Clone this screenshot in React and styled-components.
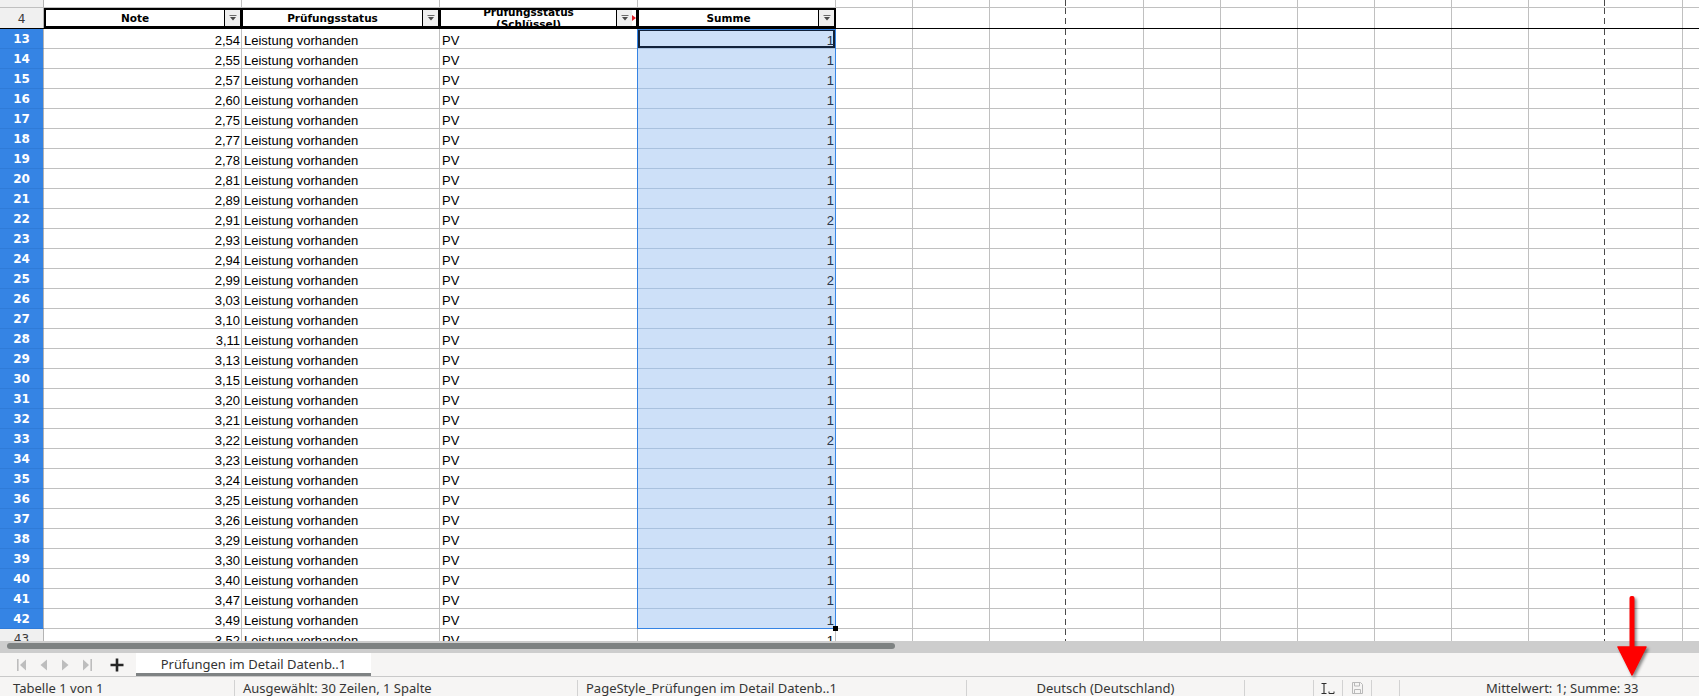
import styled, { createGlobalStyle, css } from 'styled-components'

const GlobalStyle = createGlobalStyle`
  html, body {
    margin: 0;
    padding: 0;
    width: 1699px;
    height: 696px;
    overflow: hidden;
    background: #ffffff;
  }
  #root {
    height: 696px;
  }
`

const GRID = '#c0c0c0'
const SEL_GRID = '#a9c1de'
const SEL_BG = '#cde0f8'
const ACCENT = '#3584e4'

const Page = styled.div`
  position: relative;
  width: 1699px;
  height: 696px;
  display: flex;
  flex-direction: column;
  overflow: hidden;
  font-family: 'Noto Sans', 'DejaVu Sans', sans-serif;
`

const Sheet = styled.div`
  position: relative;
  height: 641px;
  flex: none;
  overflow: hidden;
`

const Row = styled.div`
  display: flex;
  height: ${({ $h }) => $h}px;
  white-space: nowrap;
`

const RowHead = styled.div`
  width: 44px;
  flex: none;
  box-sizing: border-box;
  display: flex;
  align-items: center;
  justify-content: center;
  border-right: 1px solid #b4b4b4;
  border-bottom: ${({ $noBottom, $sel }) => ($noBottom ? 'none' : `1px solid ${$sel ? '#2f7bd8' : GRID}`)};
  background: ${({ $sel }) => ($sel ? ACCENT : '#f0f0f0')};
  color: ${({ $sel }) => ($sel ? '#ffffff' : '#3a3a3a')};
  font-family: 'DejaVu Sans', sans-serif;
  font-size: 12px;
  font-weight: ${({ $sel }) => ($sel ? 700 : 400)};
  line-height: 14px;
  padding-top: 1px;
`

const pageBreak = css`
  border-right-color: transparent;
  background-image: repeating-linear-gradient(to bottom, #4a4a4a 0 6px, transparent 6px 10px);
  background-position: right top;
  background-size: 1px 100%;
  background-repeat: no-repeat;
`

const Cell = styled.div`
  width: ${({ $w }) => $w}px;
  flex: none;
  box-sizing: border-box;
  border-right: 1px solid ${GRID};
  border-bottom: ${({ $noBottom, $sel }) => ($noBottom ? 'none' : `1px solid ${$sel ? SEL_GRID : GRID}`)};
  background-color: ${({ $sel }) => ($sel ? SEL_BG : '#ffffff')};
  ${({ $break }) => $break && pageBreak};
  box-shadow: ${({ $cursor }) => ($cursor ? 'inset 0 0 0 2px #12223a' : 'none')};
  padding: 4px 1px 0 2px;
  font-family: 'Liberation Sans', Arial, sans-serif;
  font-size: 13px;
  line-height: 15px;
  text-align: ${({ $align }) => $align || 'left'};
  color: ${({ $sel }) => ($sel ? '#26344a' : '#000000')};
  overflow: hidden;
`

const HeadCell = styled.div`
  width: ${({ $w }) => $w}px;
  flex: none;
  box-sizing: border-box;
  display: flex;
  border: 2px solid #000000;
  border-left-width: ${({ $first }) => ($first ? 2 : 1)}px;
  background: #ffffff;
  overflow: hidden;
`

const HeadLabel = styled.div`
  flex: 1;
  min-width: 0;
  display: flex;
  flex-direction: column;
  align-items: center;
  justify-content: center;
  font-family: 'DejaVu Sans', sans-serif;
  font-size: 10.5px;
  font-weight: 700;
  line-height: 12px;
  color: #000000;
  overflow: hidden;
`

const FilterButton = styled.div`
  width: 16px;
  flex: none;
  box-sizing: border-box;
  display: flex;
  align-items: center;
  justify-content: center;
  background: #efefef;
  border-left: 1px solid #000000;
`

const CommentMark = styled.div`
  width: 4px;
  flex: none;
  display: flex;
  align-items: center;
  background: #ffffff;
`

const Freeze = styled.div`
  height: 1px;
  background: #000000;
`

const SelectionFrame = styled.div`
  position: absolute;
  left: 637px;
  top: 29px;
  width: 199px;
  height: 600px;
  box-sizing: border-box;
  border: 1px solid ${ACCENT};
  pointer-events: none;
`

const FillHandle = styled.div`
  position: absolute;
  left: 833px;
  top: 626px;
  width: 5px;
  height: 5px;
  background: #000000;
`

const ScrollTrack = styled.div`
  height: 12px;
  flex: none;
  box-sizing: border-box;
  background: #cdcdcd;
  padding: 2px 0 0 7px;
`

const ScrollThumb = styled.div`
  width: 888px;
  height: 6px;
  border-radius: 3px;
  background: #7e8282;
`

const TabBar = styled.div`
  height: 23px;
  flex: none;
  display: flex;
  align-items: stretch;
  padding-left: 10px;
  background: #f6f5f4;
`

const NavButton = styled.div`
  width: 22px;
  display: flex;
  align-items: center;
  justify-content: center;
`

const PlusButton = styled.div`
  width: 38px;
  display: flex;
  align-items: center;
  justify-content: center;
`

const SheetTab = styled.div`
  width: 235px;
  box-sizing: border-box;
  display: flex;
  align-items: center;
  justify-content: center;
  background: #ffffff;
  border-bottom: 3px solid #7f8384;
  color: #333333;
  font-size: 13px;
  padding-top: 1px;
`

const StatusBar = styled.div`
  height: 20px;
  flex: none;
  box-sizing: border-box;
  display: flex;
  border-top: 1px solid #c9c9c9;
  background: #f6f5f4;
  padding-top: 3px;
  color: #353535;
  font-size: 13px;
  line-height: 16px;
`

const Field = styled.div`
  width: ${({ $w }) => ($w ? `${$w}px` : 'auto')};
  flex: ${({ $w }) => ($w ? 'none' : '1')};
  box-sizing: border-box;
  display: flex;
  align-items: center;
  justify-content: ${({ $center }) => ($center ? 'center' : 'flex-start')};
  padding-left: ${({ $pad }) => $pad || 0}px;
  border-right: ${({ $last }) => ($last ? 'none' : '1px solid #d2d2d2')};
  white-space: nowrap;
`

const ArrowMark = styled.svg`
  position: absolute;
  left: 1612px;
  top: 592px;
  filter: drop-shadow(2px 2px 1.5px rgba(0, 0, 0, 0.45));
`

const DATA = [
  [13, '2,54', 1], [14, '2,55', 1], [15, '2,57', 1], [16, '2,60', 1], [17, '2,75', 1],
  [18, '2,77', 1], [19, '2,78', 1], [20, '2,81', 1], [21, '2,89', 1], [22, '2,91', 2],
  [23, '2,93', 1], [24, '2,94', 1], [25, '2,99', 2], [26, '3,03', 1], [27, '3,10', 1],
  [28, '3,11', 1], [29, '3,13', 1], [30, '3,15', 1], [31, '3,20', 1], [32, '3,21', 1],
  [33, '3,22', 2], [34, '3,23', 1], [35, '3,24', 1], [36, '3,25', 1], [37, '3,26', 1],
  [38, '3,29', 1], [39, '3,30', 1], [40, '3,40', 1], [41, '3,47', 1], [42, '3,49', 1],
  [43, '3,52', 1],
]

const COL_W = 198
const EMPTY_W = 77
const EMPTY_COLS = Array.from({ length: 12 }, (_, i) => i)
const isBreak = (i) => i === 2 || i === 9

function FilterArrow() {
  return (
    <svg width="10" height="8" viewBox="0 0 10 8">
      <path d="M1.5 1.5h7" stroke="#6a6a6a" strokeWidth="1" />
      <path d="M2 3h6l-3 3.5z" fill="#4a4a4a" />
    </svg>
  )
}

function EmptyCells({ noBottom }) {
  return EMPTY_COLS.map((i) => (
    <Cell key={i} $w={EMPTY_W} $break={isBreak(i)} $noBottom={noBottom} />
  ))
}

function Header() {
  return (
    <Row $h={20}>
      <RowHead $noBottom>4</RowHead>
      <HeadCell $w={COL_W} $first>
        <HeadLabel>Note</HeadLabel>
        <FilterButton><FilterArrow /></FilterButton>
      </HeadCell>
      <HeadCell $w={COL_W}>
        <HeadLabel>Prüfungsstatus</HeadLabel>
        <FilterButton><FilterArrow /></FilterButton>
      </HeadCell>
      <HeadCell $w={COL_W}>
        <HeadLabel>
          <span>Prüfungsstatus</span>
          <span>(Schlüssel)</span>
        </HeadLabel>
        <FilterButton><FilterArrow /></FilterButton>
        <CommentMark>
          <svg width="4" height="6" viewBox="0 0 4 6">
            <path d="M0 0l4 3-4 3z" fill="#e01b24" />
          </svg>
        </CommentMark>
      </HeadCell>
      <HeadCell $w={COL_W}>
        <HeadLabel>Summe</HeadLabel>
        <FilterButton><FilterArrow /></FilterButton>
      </HeadCell>
      <EmptyCells noBottom />
    </Row>
  )
}

function DataRow({ row }) {
  const [num, note, sum] = row
  const sel = num <= 42
  return (
    <Row $h={20}>
      <RowHead $sel={sel}>{num}</RowHead>
      <Cell $w={COL_W} $align="right">{note}</Cell>
      <Cell $w={COL_W}>Leistung vorhanden</Cell>
      <Cell $w={COL_W}>PV</Cell>
      <Cell $w={COL_W} $align="right" $sel={sel} $cursor={num === 13}>{sum}</Cell>
      <EmptyCells />
    </Row>
  )
}

export default function App() {
  return (
    <Page>
      <GlobalStyle />
      <Sheet>
        <Row $h={8}>
          <RowHead />
          <Cell $w={COL_W} />
          <Cell $w={COL_W} />
          <Cell $w={COL_W} />
          <Cell $w={COL_W} />
          <EmptyCells />
        </Row>
        <Header />
        <Freeze />
        {DATA.map((row) => (
          <DataRow key={row[0]} row={row} />
        ))}
        <SelectionFrame />
        <FillHandle />
      </Sheet>

      <ScrollTrack>
        <ScrollThumb />
      </ScrollTrack>

      <TabBar>
        <NavButton>
          <svg width="9" height="12" viewBox="0 0 9 12">
            <rect x="0" y="0" width="1.6" height="12" fill="#bdbdbd" />
            <path d="M9 0.5v11L3 6z" fill="#bdbdbd" />
          </svg>
        </NavButton>
        <NavButton>
          <svg width="7" height="12" viewBox="0 0 7 12">
            <path d="M7 0.5v11L0.5 6z" fill="#bdbdbd" />
          </svg>
        </NavButton>
        <NavButton>
          <svg width="7" height="12" viewBox="0 0 7 12">
            <path d="M0 0.5v11L6.5 6z" fill="#bdbdbd" />
          </svg>
        </NavButton>
        <NavButton>
          <svg width="9" height="12" viewBox="0 0 9 12">
            <path d="M0 0.5v11L6 6z" fill="#bdbdbd" />
            <rect x="7.4" y="0" width="1.6" height="12" fill="#bdbdbd" />
          </svg>
        </NavButton>
        <PlusButton>
          <svg width="14" height="14" viewBox="0 0 14 14">
            <path d="M7 0.5v13M0.5 7h13" stroke="#262626" strokeWidth="2.6" />
          </svg>
        </PlusButton>
        <SheetTab>Prüfungen im Detail Datenb..1</SheetTab>
      </TabBar>

      <StatusBar>
        <Field $w={235} $pad={13}>Tabelle 1 von 1</Field>
        <Field $w={343} $pad={8}>Ausgewählt: 30 Zeilen, 1 Spalte</Field>
        <Field $w={389} $pad={8}>PageStyle_Prüfungen im Detail Datenb..1</Field>
        <Field $w={278} $center>Deutsch (Deutschland)</Field>
        <Field $w={69} />
        <Field $w={29} $center>
          <svg width="16" height="13" viewBox="0 0 16 13">
            <path d="M1.5 1.5h5M4 1.5v10M1.5 11.5h5" stroke="#2e2e2e" strokeWidth="1.1" fill="none" />
            <path d="M9 9.5v2h5v-2" stroke="#2e2e2e" strokeWidth="1" fill="none" />
          </svg>
        </Field>
        <Field $w={29} $center>
          <svg width="11" height="12" viewBox="0 0 11 12">
            <path d="M0.5 0.5h8l2 2v9h-10z" stroke="#b9b9b9" fill="none" />
            <path d="M2.5 0.5v3.5h5v-3.5" stroke="#b9b9b9" fill="none" />
            <path d="M2.5 11.5v-4h6v4" stroke="#b9b9b9" fill="none" />
          </svg>
        </Field>
        <Field $w={28} />
        <Field $pad={86} $last>Mittelwert: 1; Summe: 33</Field>
      </StatusBar>

      <ArrowMark width="40" height="88" viewBox="0 0 40 88">
        <rect x="17.5" y="4" width="5" height="54" rx="2" fill="#ff0000" />
        <path d="M6 55h28L20 83z" fill="#ff0000" strokeLinejoin="round" stroke="#ff0000" strokeWidth="1.5" />
      </ArrowMark>
    </Page>
  )
}
